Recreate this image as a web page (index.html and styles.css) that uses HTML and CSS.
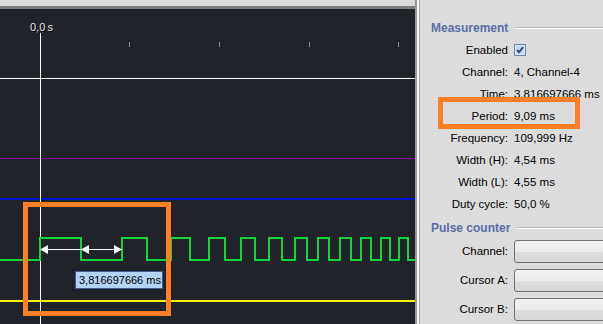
FILE: index.html
```html
<!DOCTYPE html>
<html>
<head>
<meta charset="utf-8">
<link rel="stylesheet" href="styles.css">
</head>
<body>
<div class="app">
  <div class="scope">
    <div class="scope-top"></div>
    <div class="scope-canvas">
      <svg class="plot" width="415" height="315" viewBox="0 9 415 315" shape-rendering="crispEdges">
        <g fill="#8e8e8e">
          <rect x="129" y="42" width="1" height="5"/>
          <rect x="219" y="42" width="1" height="5"/>
          <rect x="309" y="42" width="1" height="5"/>
          <rect x="398" y="42" width="1" height="5"/>
        </g>
        <rect x="0" y="78" width="415" height="1" fill="#ffffff"/>
        <rect x="0" y="158" width="415" height="1" fill="#8a0a9a"/>
        <rect x="0" y="198" width="415" height="2" fill="#0010d0"/>
        <rect x="0" y="300" width="415" height="2" fill="#f4f400"/>
        <rect x="40" y="33" width="1" height="291" fill="#ffffff"/>
        <polyline fill="none" stroke="#12d43a" stroke-width="2"
          points="0,260 40,260 40,238 81,238 81,260 122,260 122,238 147,238 147,260 171,260 171,238 190,238 190,260 209,260 209,238 225,238 225,260 241,260 241,238 255,238 255,260 269,260 269,238 282,238 282,260 295,260 295,238 307,238 307,260 318,260 318,238 329,238 329,260 340,260 340,238 351,238 351,260 361,260 361,238 371,238 371,260 381,260 381,238 390,238 390,260 399,260 399,238 408,238 408,260 415,260"/>
        <rect x="44" y="249" width="74" height="1" fill="#ffffff"/>
        <g fill="#ffffff" shape-rendering="auto">
          <polygon points="40,249.5 48,245 48,254"/>
          <polygon points="81,249.5 89,245 89,254"/>
          <polygon points="122,249.5 114,245 114,254"/>
        </g>
        <g font-family="Liberation Sans, Arial, sans-serif" font-size="11" shape-rendering="auto">
          <text x="31" y="32" fill="#000000">0,0&#8239;s</text>
          <text x="30" y="31" fill="#e6e6e6">0,0&#8239;s</text>
        </g>
      </svg>
      <div class="tooltip">3,816697666 ms</div>
    </div>
  </div>
  <div class="splitter"></div>
  <div class="panel">
    <div class="group-title"><span>Measurement</span><i class="rule"></i></div>
    <div class="fields">
      <span class="lbl">Enabled</span>
      <span class="val"><svg class="check" width="12" height="12" viewBox="0 0 12 12">
        <rect x="0.5" y="0.5" width="11" height="11" fill="#dce6f4" stroke="#6d84b4"/>
        <rect x="2" y="2" width="8" height="8" fill="#c5d5ec"/>
        <path d="M3 6 L5 8.2 L9 3.2" fill="none" stroke="#21407e" stroke-width="1.8"/>
      </svg></span>
      <span class="lbl">Channel:</span><span class="val">4, Channel-4</span>
      <span class="lbl">Time:</span><span class="val">3,816697666 ms</span>
      <span class="lbl">Period:</span><span class="val">9,09 ms</span>
      <span class="lbl">Frequency:</span><span class="val">109,999 Hz</span>
      <span class="lbl">Width (H):</span><span class="val">4,54 ms</span>
      <span class="lbl">Width (L):</span><span class="val">4,55 ms</span>
      <span class="lbl">Duty cycle:</span><span class="val">50,0 %</span>
    </div>
    <div class="group-title second"><span>Pulse counter</span><i class="rule"></i></div>
    <div class="fields buttons">
      <span class="lbl">Channel:</span><span class="btn"></span>
      <span class="lbl">Cursor A:</span><span class="btn"></span>
      <span class="lbl">Cursor B:</span><span class="btn"></span>
    </div>
  </div>
  <div class="mark mark-wave"></div>
  <div class="mark mark-period"></div>
</div>
</body>
</html>
```
FILE: styles.css
```css
html, body {
  margin: 0;
  padding: 0;
  width: 603px;
  height: 324px;
  overflow: hidden;
}
body {
  font-family: "Liberation Sans", Arial, sans-serif;
  background: #dcdcdc;
}
.app {
  position: relative;
  display: flex;
  width: 603px;
  height: 324px;
  overflow: hidden;
}
.scope {
  width: 415px;
  display: flex;
  flex-direction: column;
  flex: none;
}
.scope-top {
  height: 6px;
  background: #dcdcdc;
  border-bottom: 3px solid #7b7b7b;
}
.scope-canvas {
  position: relative;
  flex: 1;
  background: #202329;
}
.plot {
  display: block;
}
.tooltip {
  position: absolute;
  left: 75px;
  top: 262px;
  width: 88px;
  height: 18px;
  box-sizing: border-box;
  background: #b3d2f7;
  border: 1px solid #3d5a8e;
  font-size: 11px;
  line-height: 16px;
  color: #000;
  padding-left: 3px;
  white-space: nowrap;
}
.splitter {
  flex: none;
  width: 2px;
  background: #f2f2f2;
  border-left: 2px solid #979797;
  border-right: 1px solid #a6a6a6;
}
.panel {
  flex: 1;
  padding-top: 20px;
  overflow: hidden;
  background: #dcdcdc;
}
.group-title {
  display: flex;
  align-items: center;
  gap: 7px;
  height: 15px;
  padding-left: 11px;
  font-size: 12px;
  font-weight: bold;
  color: #5a6ea6;
  white-space: nowrap;
}
.group-title.second {
  margin-top: 5px;
}
.rule {
  flex: 1;
  height: 0;
  border-top: 1px solid #b4b4b4;
  border-bottom: 1px solid #ffffff;
  margin-top: 1px;
}
.fields {
  display: grid;
  grid-template-columns: 88px 1fr;
  grid-auto-rows: 22px;
  column-gap: 6px;
  margin-top: 4px;
  font-size: 11.5px;
  color: #000;
}
.lbl {
  text-align: right;
  line-height: 22px;
  white-space: nowrap;
}
.val {
  line-height: 22px;
  white-space: nowrap;
  display: flex;
  align-items: center;
}
.check {
  display: block;
}
.fields.buttons {
  margin-top: 5px;
  grid-auto-rows: 23px;
  row-gap: 6px;
}
.fields.buttons .lbl {
  line-height: 23px;
}
.btn {
  width: 110px;
  height: 23px;
  box-sizing: border-box;
  border: 1px solid #707070;
  border-radius: 3px;
  background: linear-gradient(#f2f2f2, #ebebeb 50%, #dddddd 51%, #d6d6d6);
}
.mark {
  position: absolute;
  box-sizing: border-box;
  border: 5px solid #ff7f27;
}
.mark-wave {
  left: 23px;
  top: 202px;
  width: 148px;
  height: 114px;
}
.mark-period {
  left: 438px;
  top: 97px;
  width: 142px;
  height: 32px;
}
```
